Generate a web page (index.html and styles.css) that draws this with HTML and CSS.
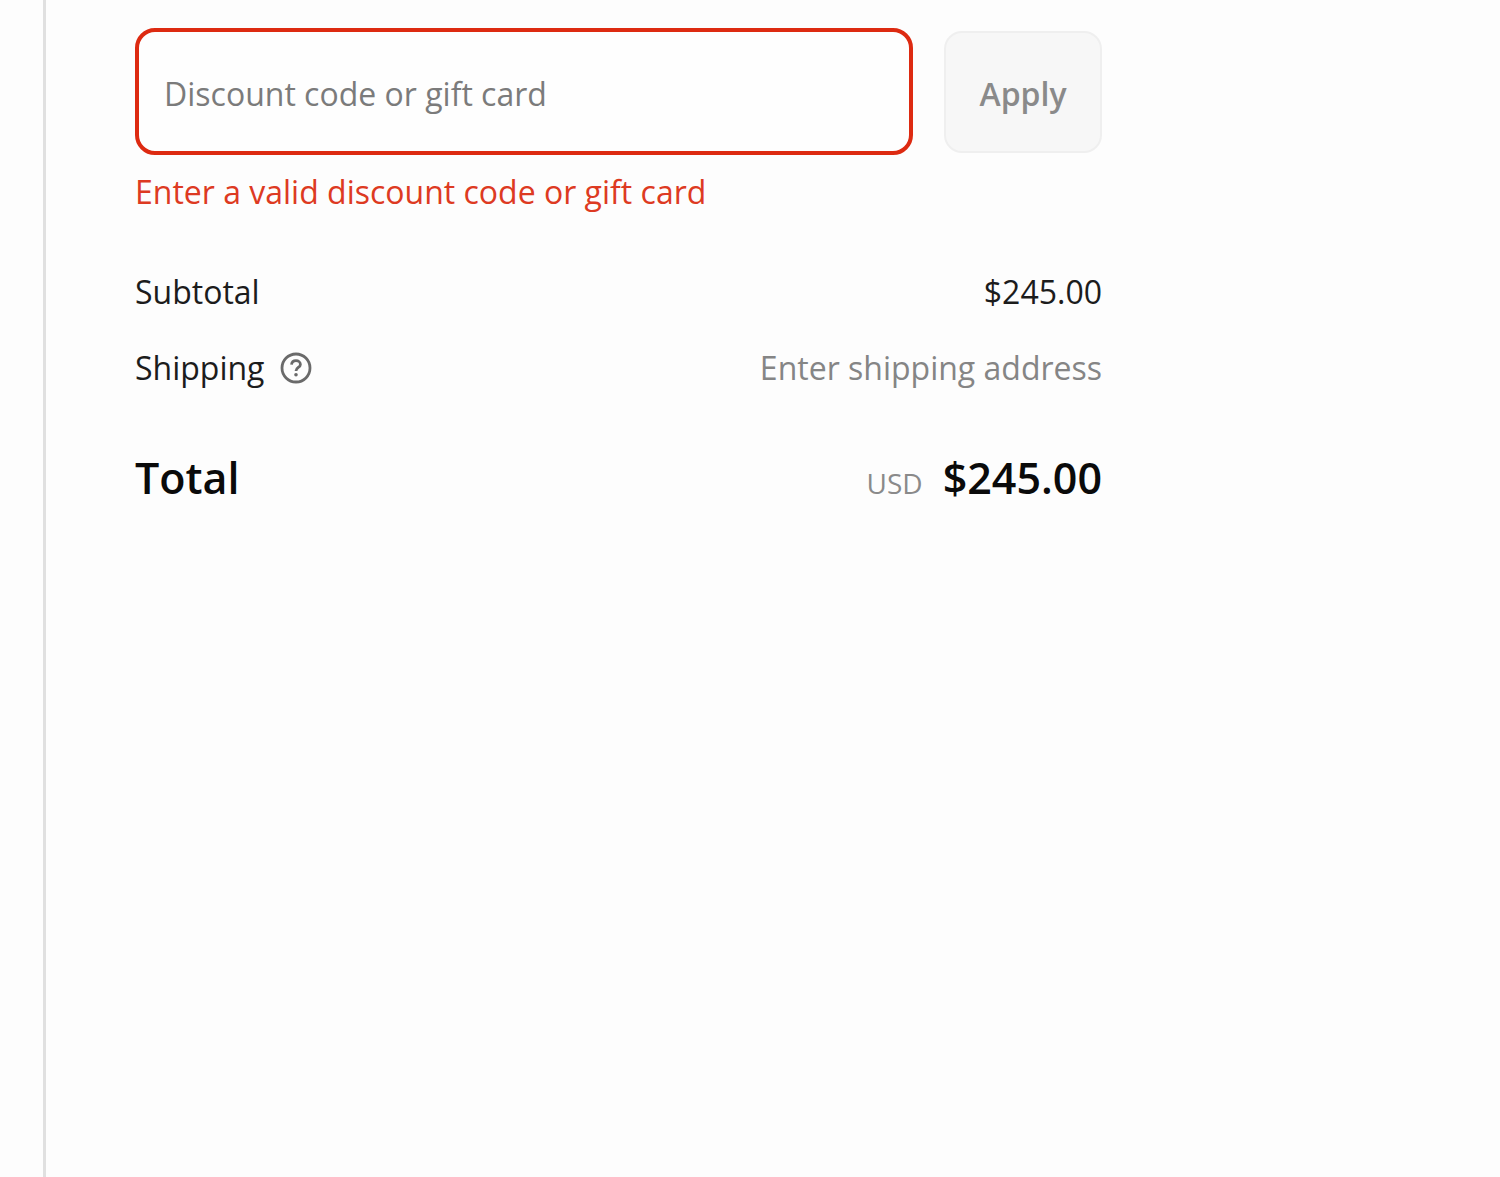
FILE: index.html
```html
<!DOCTYPE html>
<html lang="en">
<head>
<meta charset="utf-8">
<title>Checkout</title>
<link rel="stylesheet" href="styles.css">
</head>
<body>
<main class="page">
  <aside class="summary">
    <form class="discount">
      <input class="discount-input" id="code" type="text" placeholder="Discount code or gift card" aria-label="Discount code or gift card" aria-invalid="true" aria-describedby="code-error">
      <button class="apply" type="button">Apply</button>
    </form>
    <p class="error" id="code-error">Enter a valid discount code or gift card</p>
    <dl class="costs">
      <div class="row">
        <dt>Subtotal</dt>
        <dd>$245.00</dd>
      </div>
      <div class="row">
        <dt class="label">Shipping
          <svg class="help" viewBox="0 0 32 32" fill="none" stroke="currentColor" aria-hidden="true">
            <circle cx="16" cy="16" r="14" stroke-width="2.8"/>
            <path d="M11.500 12.600c.3-2.500 2-3.900 4.500-3.900s4.400 1.500 4.400 3.700c0 3-4.400 3.200-4.400 6.500" stroke-width="2.800"/>
            <circle cx="16" cy="22.800" r="1.800" fill="currentColor" stroke="none"/>
          </svg>
        </dt>
        <dd class="muted">Enter shipping address</dd>
      </div>
      <div class="row total">
        <dt>Total</dt>
        <dd class="amount"><span class="currency">USD</span> <strong>$245.00</strong></dd>
      </div>
    </dl>
  </aside>
</main>
</body>
</html>
```
FILE: styles.css
```css
* {
  box-sizing: border-box;
}

body {
  margin: 0;
  background: #fdfdfd;
  color: #1c1c1c;
  font: 32px/48px "Open Sans", "Noto Sans", sans-serif;
}

.page {
  min-height: 100vh;
  margin-left: 43px;
  border-left: 3px solid #e0e0e0;
}

.summary {
  max-width: 1056px;
  padding: 28px 0 0 89px;
}

.discount {
  display: flex;
  align-items: center;
  gap: 31px;
}

.discount-input {
  flex: 1;
  min-width: 0;
  height: 127px;
  padding: 4px 25px 0;
  border: 4px solid #dd2a11;
  border-radius: 20px;
  background: #fefefe;
  color: #1c1c1c;
  font: inherit;
}

.discount-input::placeholder {
  color: #7b7b7b;
  opacity: 1;
}

.apply {
  width: 158px;
  height: 122px;
  padding: 4px 0 0;
  border: 2px solid #efefef;
  border-radius: 18px;
  background: #f7f7f7;
  color: #8a8a8a;
  font: inherit;
  font-weight: 600;
}

.error {
  margin: 13px 0 0;
  color: #dd3a22;
}

.costs {
  display: grid;
  gap: 28px;
  margin: 52px 0 0;
}

.row {
  display: flex;
  align-items: center;
  justify-content: space-between;
}

.row dd {
  margin: 0;
}

.label {
  display: flex;
  align-items: center;
  gap: 16px;
}

.help {
  width: 32px;
  height: 32px;
  color: #6a6a6a;
}

.row .muted {
  color: #858585;
}

.row.total {
  align-items: baseline;
  margin-top: 34px;
  color: #0a0a0a;
  font-size: 43px;
  font-weight: 600;
}

.amount {
  display: flex;
  align-items: baseline;
  gap: 20px;
}

.amount strong {
  font-weight: 600;
}

.currency {
  color: #8a8a8a;
  font-size: 28px;
  font-weight: 400;
}
```
